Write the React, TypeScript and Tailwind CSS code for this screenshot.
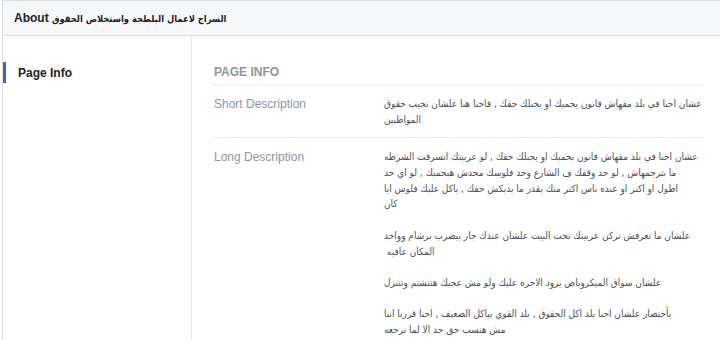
import React from 'react';

const shortLines = [
  'عشان احنا في بلد مفهاش قانون يحميك او يجبلك حقك , فاحنا هنا علشان نجيب حقوق',
  'المواطنين',
];

const longLines = [
  'عشان احنا في بلد مفهاش قانون يحميك او يجبلك حقك , لو عربيتك اتسرقت الشرطه',
  'ما بترجمهاش , لو حد وقفك ف الشارع وخد فلوسك محدش هيحميك , لو اي حد',
  'اطول او اكبر او عنده ناس اكتر منك يقدر ما يديكش حقك , ياكل عليك فلوس ايا',
  'كان',
  '',
  'علشان ما تعرفش تركن عربيتك تحت البيت علشان عندك جار بيضرب برشام وواخد',
  '\u00a0المكان عافيه',
  '',
  'علشان سواق الميكروباص يزود الاجره عليك ولو مش عجبك هتتشتم وتتنزل',
  '',
  'بأختصار علشان احنا بلد اكل الحقوق , بلد القوي بياكل الضعيف , احنا قررنا اننا',
  'مش هنسب حق حد الا لما نرجعه',
];

const ArabicBlock: React.FC<{ lines: string[] }> = ({ lines }) => (
  <div className="flex-1 text-left text-[10px] leading-[15.7px] text-[#4b4f56] font-['DejaVu_Sans_Condensed','DejaVu_Sans',sans-serif]">
    {lines.map((l, i) => (
      <div key={i} className="whitespace-nowrap h-[15.7px]">
        {l}
      </div>
    ))}
  </div>
);

export default function App() {
  return (
    <div className="w-[720px] h-[340px] overflow-hidden bg-white font-['Liberation_Sans','DejaVu_Sans',sans-serif]">
      <div className="ml-[2px] h-full border-l border-t border-[#dddfe2] flex flex-col">
        {/* header */}
        <div className="h-[35px] shrink-0 flex items-center pl-[11px] bg-[#f6f7f9] border-b border-[#dddfe2]">
          <span className="text-[12px] font-bold text-[#1d2129]">
            About{' '}
            <span className="text-[9.3px] font-['DejaVu_Sans_Condensed','DejaVu_Sans',sans-serif]">السراج لاعمال البلطجة واستخلاص الحقوق</span>
          </span>
        </div>

        <div className="flex flex-1">
          {/* sidebar */}
          <div className="w-[189px] shrink-0 border-r border-[#e5e6e9] pt-[26px]">
            <div className="h-[21px] flex items-center border-l-[3px] border-[#4267b2] pl-[12px]">
              <span className="text-[12px] font-bold text-[#1d2129]">Page Info</span>
            </div>
          </div>

          {/* main */}
          <div className="flex-1 pl-[20px] pr-[17px]">
            <div className="pt-[28px] pb-[4px] px-[2px] border-b border-[#e9ebee]">
              <div className="text-[12px] leading-[16px] font-bold text-[#90949c] uppercase">Page Info</div>
            </div>

            <div className="flex px-[2px] pt-[11px] pb-[10px] border-b border-[#e9ebee]">
              <div className="w-[170px] shrink-0 text-[12px] leading-[16px] text-[#90949c]">Short Description</div>
              <ArabicBlock lines={shortLines} />
            </div>

            <div className="flex px-[2px] pt-[11px]">
              <div className="w-[170px] shrink-0 text-[12px] leading-[16px] text-[#90949c]">Long Description</div>
              <ArabicBlock lines={longLines} />
            </div>
          </div>
        </div>
      </div>
    </div>
  );
}
